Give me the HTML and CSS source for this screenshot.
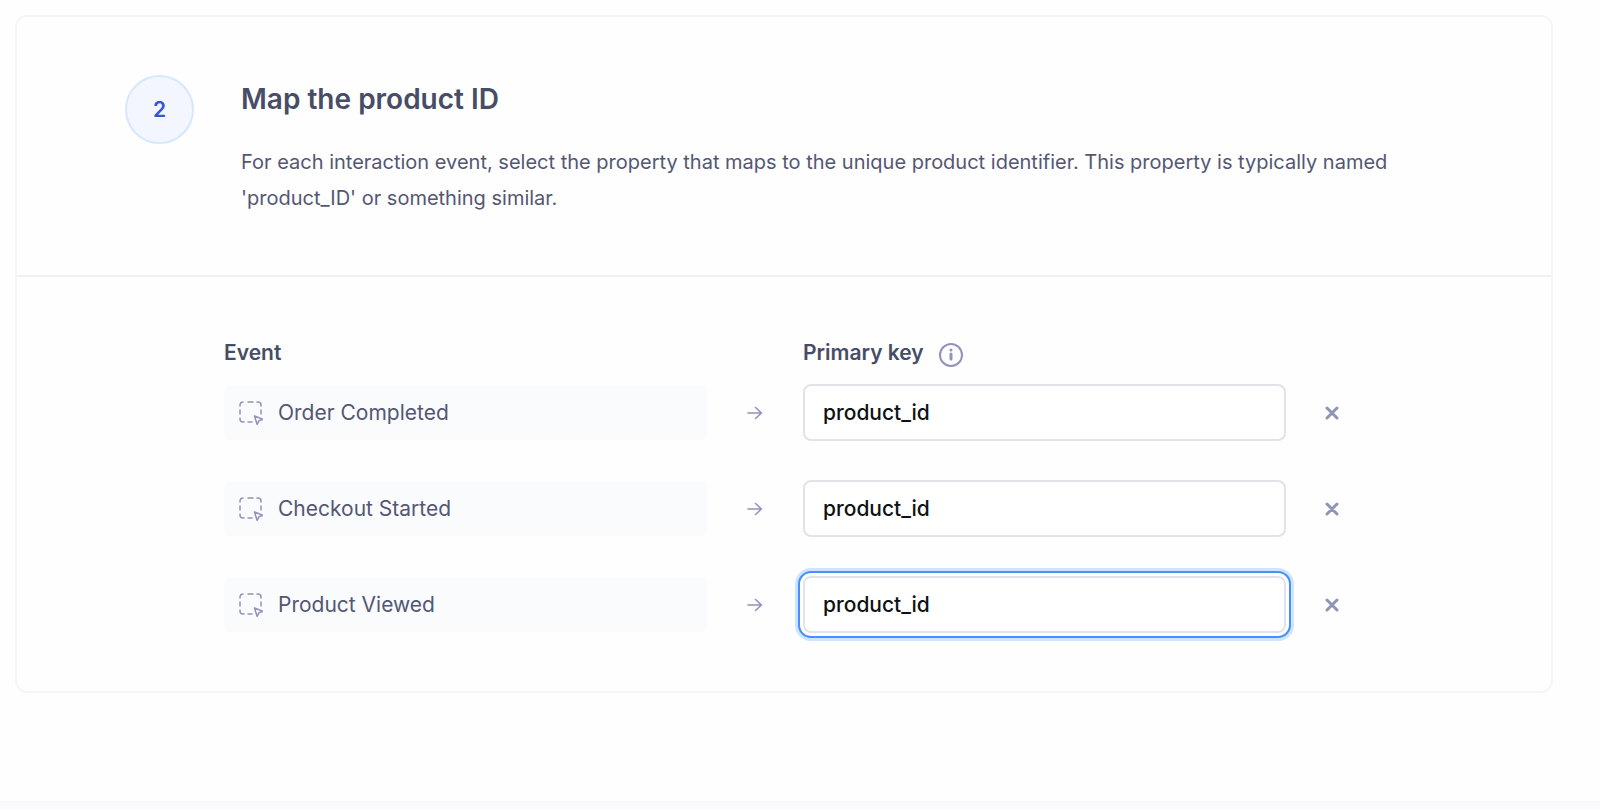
FILE: index.html
```html
<!DOCTYPE html>
<html lang="en">
<head>
    <meta charset="UTF-8">
    <meta name="viewport" content="width=device-width, initial-scale=1.0">
    <title>Map the product ID</title>
    <link rel="stylesheet" href="styles.css">
</head>
<body>
    <!-- Shared icons -->
    <svg class="icon-defs" width="0" height="0" aria-hidden="true">
        <symbol id="icon-event" viewBox="0 0 24 24">
            <path d="M1 5V4a3 3 0 0 1 3-3M9 1h5M18 1h1a3 3 0 0 1 3 3v1M22 9v4M1 9v4M1 17v1a3 3 0 0 0 3 3h1M9 21h4"/>
            <path d="M15.500 15l8.500 3.300-4 1.400-1.900 3.700z"/>
        </symbol>
        <symbol id="icon-arrow" viewBox="0 0 16 16">
            <path d="M1 8h13.500M8.500 2.500L14.500 8l-6 5.500"/>
        </symbol>
        <symbol id="icon-close" viewBox="0 0 14 14">
            <path d="M2 2l10 10M12 2L2 12"/>
        </symbol>
    </svg>

    <main class="page">
        <section class="card">
            <header class="card-header">
                <div class="step">2</div>
                <div class="intro">
                    <h1>Map the product ID</h1>
                    <p>For each interaction event, select the property that maps to the unique product identifier. This property is typically named 'product_ID' or something similar.</p>
                </div>
            </header>

            <form class="mapping">
                <div class="row row-head">
                    <span class="head-event">Event</span>
                    <span class="head-key">
                        Primary key
                        <svg class="icon-info" viewBox="0 0 24 24" role="img" aria-label="Info">
                            <circle cx="12" cy="12" r="11"/>
                            <path class="info-mark" d="M12 11v5M12 7v.1"/>
                        </svg>
                    </span>
                </div>

                <div class="row">
                    <label class="event" for="key-order">
                        <svg class="icon-event"><use href="#icon-event"/></svg>
                        Order Completed
                    </label>
                    <svg class="icon-arrow"><use href="#icon-arrow"/></svg>
                    <input class="key" id="key-order" type="text" value="product_id">
                    <button class="remove" type="button" aria-label="Remove Order Completed">
                        <svg class="icon-close"><use href="#icon-close"/></svg>
                    </button>
                </div>

                <div class="row">
                    <label class="event" for="key-checkout">
                        <svg class="icon-event"><use href="#icon-event"/></svg>
                        Checkout Started
                    </label>
                    <svg class="icon-arrow"><use href="#icon-arrow"/></svg>
                    <input class="key" id="key-checkout" type="text" value="product_id">
                    <button class="remove" type="button" aria-label="Remove Checkout Started">
                        <svg class="icon-close"><use href="#icon-close"/></svg>
                    </button>
                </div>

                <div class="row">
                    <label class="event" for="key-viewed">
                        <svg class="icon-event"><use href="#icon-event"/></svg>
                        Product Viewed
                    </label>
                    <svg class="icon-arrow"><use href="#icon-arrow"/></svg>
                    <input class="key active" id="key-viewed" type="text" value="product_id">
                    <button class="remove" type="button" aria-label="Remove Product Viewed">
                        <svg class="icon-close"><use href="#icon-close"/></svg>
                    </button>
                </div>
            </form>
        </section>
    </main>
    <div class="page-end"></div>
</body>
</html>
```

FILE: styles.css
```css
* {
    box-sizing: border-box;
}

body {
    margin: 0;
    font-family: 'Inter', 'Liberation Sans', sans-serif;
    font-size: 21px;
    color: #545774;
    background-color: #fefefe;
}

.icon-defs {
    position: absolute;
}

.page {
    padding: 15px 47px 108px 15px;
}

.card {
    border: 2px solid #f4f5f8;
    border-radius: 12px;
}

.card-header {
    display: flex;
    align-items: flex-start;
    gap: 47px;
    padding: 58px 108px 59px;
    border-bottom: 2px solid #eff0f6;
}

.step {
    display: flex;
    align-items: center;
    justify-content: center;
    flex: none;
    width: 69px;
    height: 69px;
    border: 2px solid #d5e8fd;
    border-radius: 50%;
    background-color: #f3f6fe;
    color: #3355d8;
    font-weight: 600;
}

h1 {
    margin: 4px 0 25px;
    font-size: 28px;
    line-height: 40px;
    font-weight: 600;
    color: #474d66;
}

.intro p {
    margin: 0;
    font-size: 20px;
    line-height: 36px;
}

.mapping {
    display: flex;
    flex-direction: column;
    gap: 39px;
    padding: 60px 207px 58px;
}

.row {
    display: grid;
    grid-template-columns: 1fr 96px 1fr 58px;
    align-items: center;
}

.row-head {
    margin-bottom: -24px;
    line-height: 32px;
    font-weight: 600;
    color: #474d66;
}

.head-key {
    display: flex;
    align-items: center;
    gap: 15px;
    grid-column: 3;
}

.event {
    display: flex;
    align-items: center;
    gap: 15px;
    height: 54px;
    padding: 0 15px;
    border-radius: 6px;
    background-color: #f9fbfd;
}

.key {
    width: 100%;
    height: 57px;
    padding: 0 18px;
    border: 2px solid #e2e2eb;
    border-radius: 8px;
    background-color: #fff;
    color: #101114;
    font: inherit;
    font-weight: 500;
}

.key.active,
.key:focus {
    outline: 2px solid #4690fb;
    outline-offset: 3px;
    box-shadow: 0 0 0 3px #fff, 0 0 0 8px #cfe4fe;
}

.remove {
    display: flex;
    justify-self: end;
    padding: 5px;
    border: none;
    background: none;
    cursor: pointer;
}

svg {
    flex: none;
    fill: none;
    stroke: #9194b8;
    stroke-linecap: round;
    stroke-linejoin: round;
}

.icon-event {
    width: 24px;
    height: 24px;
    stroke-width: 1.5;
}

.icon-info {
    width: 24px;
    height: 24px;
    margin-top: 4px;
    stroke-width: 2;
}

.info-mark {
    stroke-width: 3;
}

.icon-arrow {
    justify-self: center;
    width: 16px;
    height: 16px;
    stroke-width: 1.6;
}

.icon-close {
    width: 14px;
    height: 14px;
    stroke-width: 3;
}

.page-end {
    height: 8px;
    border-top: 2px solid #f5f7f8;
    background-color: #f8fafe;
}
```
